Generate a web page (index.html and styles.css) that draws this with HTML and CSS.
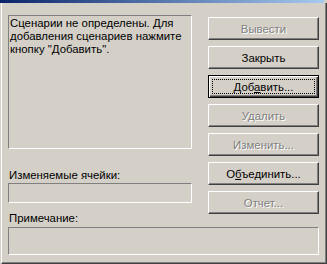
FILE: index.html
```html
<!DOCTYPE html>
<html lang="ru">
<head>
    <meta charset="UTF-8">
    <title>Диспетчер сценариев</title>
    <link rel="stylesheet" href="styles.css">
</head>
<body>
    <div class="window">
        <div class="titlebar"></div>
        <div class="frame">
            <div class="main">
                <div class="left">
                    <div class="listbox">Сценарии не определены. Для<br>добавления сценариев нажмите<br>кнопку "Добавить".</div>
                    <div class="label label-cells">Изменяемые ячейки:</div>
                    <div class="field"></div>
                    <div class="label label-note">Примечание:</div>
                </div>
                <div class="buttons">
                    <button type="button" class="btn" disabled>Вывести</button>
                    <button type="button" class="btn">Закрыть</button>
                    <button type="button" class="btn btn-default">Доб<u>а</u>вить...</button>
                    <button type="button" class="btn" disabled>Удалить</button>
                    <button type="button" class="btn" disabled>Изменить...</button>
                    <button type="button" class="btn">О<u>б</u>ъединить...</button>
                    <button type="button" class="btn" disabled>Отчет...</button>
                </div>
            </div>
            <div class="note"></div>
        </div>
    </div>
</body>
</html>
```

FILE: styles.css
```css
html, body {
    margin: 0;
    padding: 0;
}

body {
    width: 327px;
    height: 264px;
    overflow: hidden;
    background-color: #d4d0c8;
    font-family: "Liberation Sans", Arial, sans-serif;
    font-size: 11.4px;
    color: #000;
}

.window {
    display: flex;
    flex-direction: column;
    height: 264px;
}

.titlebar {
    height: 3px;
    margin-right: 3px;
    background: linear-gradient(to right, #0a246a, #a6caf0);
}

.frame {
    flex: 1;
    margin-left: 1px;
    padding: 12px 0 0 6px;
    border-left: 1px solid #fff;
    border-right: 1px solid #404040;
    border-bottom: 1px solid #404040;
    box-shadow: inset -1px -1px 0 #808080;
}

.main {
    display: flex;
    align-items: flex-start;
    gap: 16px;
}

.left {
    width: 184px;
}

.listbox {
    box-sizing: border-box;
    height: 134px;
    padding: 1px 0 0 1px;
    line-height: 13px;
    border: 1px solid;
    border-color: #808080 #fff #fff #808080;
}

.label {
    line-height: 13px;
    padding-left: 1px;
}

.label-cells {
    margin-top: 20px;
}

.label-note {
    margin-top: 9px;
}

.field {
    box-sizing: border-box;
    height: 20px;
    margin-top: 1px;
    border: 1px solid;
    border-color: #808080 #fff #fff #808080;
}

.note {
    box-sizing: border-box;
    width: 311px;
    height: 28px;
    margin-top: 2px;
    border: 1px solid;
    border-color: #808080 #fff #fff #808080;
}

.buttons {
    display: flex;
    flex-direction: column;
    gap: 6px;
    width: 111px;
    margin-top: 2px;
}

.btn {
    position: relative;
    box-sizing: border-box;
    height: 23px;
    padding: 0;
    font-family: inherit;
    font-size: inherit;
    color: #000;
    background-color: #d4d0c8;
    border: 1px solid;
    border-color: #fff #404040 #404040 #fff;
    box-shadow: inset -1px -1px 0 #808080;
}

.btn:disabled {
    color: #808080;
    text-shadow: 1px 1px 0 #fff;
}

.btn-default {
    border: 1px solid #000;
    box-shadow: inset 1px 1px 0 #fff, inset -1px -1px 0 #404040, inset -2px -2px 0 #808080;
}

.btn-default::after {
    content: "";
    position: absolute;
    top: 3px;
    left: 3px;
    right: 3px;
    bottom: 3px;
    border: 1px dotted #000;
}
```
